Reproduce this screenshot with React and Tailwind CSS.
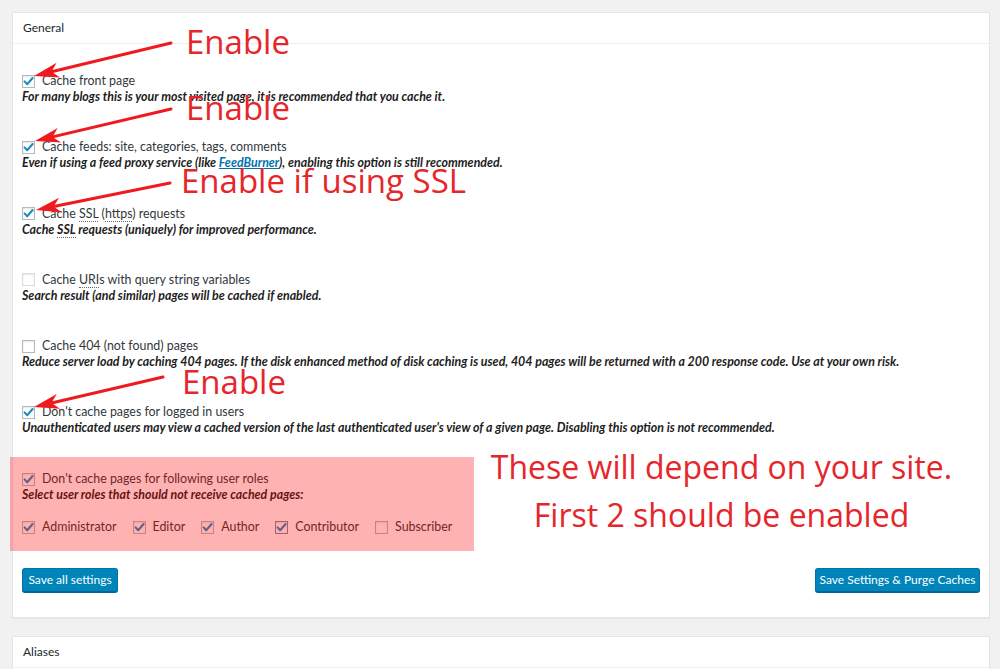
import React from "react";

function Box({ checked, variant }) {
  const border =
    variant === "light"
      ? "border-[#dcdcdc]"
      : variant === "focus"
      ? "border-[#7f8a9a]"
      : "border-[#b4b9be]";
  return (
    <span
      className={`relative inline-flex w-[13px] h-[13px] shrink-0 border ${border} bg-white shadow-[inset_0_1px_2px_rgba(0,0,0,0.1)]`}
    >
      {checked && (
        <svg viewBox="0 0 13 13" className="absolute -left-px -top-px w-[13px] h-[13px]">
          <path d="M2.6 6.4 L5.2 9.2 L10.6 3" fill="none" stroke="#1e8cbe" strokeWidth="2.1" strokeLinecap="round" strokeLinejoin="round" />
        </svg>
      )}
    </span>
  );
}

function Abbr({ children }) {
  return <span className="border-b border-dotted border-[#666]">{children}</span>;
}

function Item({ checked, variant, label, desc }) {
  return (
    <div className="flex flex-col">
      <label className="flex items-center gap-[7px] h-[16px] text-[12.4px] text-[#32373c]">
        <Box checked={checked} variant={variant} />
        <span className="leading-[16px]">{label}</span>
      </label>
      <div className="h-[15px] leading-[15px] text-[12.4px] font-bold italic text-[#1d1d1d] whitespace-nowrap">{desc}</div>
    </div>
  );
}

function Arrow({ x1, y1, x2, y2 }) {
  const dx = x2 - x1;
  const dy = y2 - y1;
  const L = Math.hypot(dx, dy);
  const ux = dx / L;
  const uy = dy / L;
  const px = -uy;
  const py = ux;
  const hl = 25;
  const hw = 7.5;
  const bx = x2 - ux * hl;
  const by = y2 - uy * hl;
  const nx = x2 - ux * hl * 0.72;
  const ny = y2 - uy * hl * 0.72;
  const pts = `${x2},${y2} ${bx + px * hw},${by + py * hw} ${nx},${ny} ${bx - px * hw},${by - py * hw}`;
  return (
    <g>
      <line x1={x1} y1={y1} x2={nx} y2={ny} stroke="#f01a1e" strokeWidth="3" strokeLinecap="round" />
      <polygon points={pts} fill="#f01a1e" />
    </g>
  );
}

const roles = [
  ["Administrator", true, "normal"],
  ["Editor", true, "normal"],
  ["Author", true, "normal"],
  ["Contributor", true, "focus"],
  ["Subscriber", false, "normal"],
];

export default function App() {
  return (
    <div className="relative w-[1000px] h-[669px] overflow-hidden bg-[#f1f1f1] font-['Lato',sans-serif]">
      <div className="ml-[12px] mr-[10px] pt-[12px]">
        <section className="bg-white border border-[#e5e5e5] shadow-[0_1px_1px_rgba(0,0,0,0.04)]">
          <h3 className="h-[31px] border-b border-[#eeeeee] pl-[10px] flex items-center text-[12px] text-[#23282d]">General</h3>
          <div className="pl-[9px] pr-[9px] pt-[29px] pb-[25px]">
            <div className="flex flex-col gap-[35.3px]">
              <Item
                checked
                label="Cache front page"
                desc="For many blogs this is your most visited page, it is recommended that you cache it."
              />
              <Item
                checked
                label="Cache feeds: site, categories, tags, comments"
                desc={
                  <>
                    Even if using a feed proxy service (like <a className="text-[#0073aa] underline">FeedBurner</a>), enabling this option is still recommended.
                  </>
                }
              />
              <Item
                checked
                label={
                  <>
                    Cache <Abbr>SSL</Abbr> (<Abbr>https</Abbr>) requests
                  </>
                }
                desc={
                  <>
                    Cache <Abbr>SSL</Abbr> requests (uniquely) for improved performance.
                  </>
                }
              />
              <Item
                variant="light"
                label={
                  <>
                    Cache <Abbr>URI</Abbr>s with query string variables
                  </>
                }
                desc="Search result (and similar) pages will be cached if enabled."
              />
              <Item
                label="Cache 404 (not found) pages"
                desc="Reduce server load by caching 404 pages. If the disk enhanced method of disk caching is used, 404 pages will be returned with a 200 response code. Use at your own risk."
              />
              <Item
                checked
                label="Don't cache pages for logged in users"
                desc="Unauthenticated users may view a cached version of the last authenticated user's view of a given page. Disabling this option is not recommended."
              />
            </div>

            <div className="relative mt-[22px] -ml-[12px] pl-[12px] w-[464px] pt-[14px] pb-[16px]">
              <Item
                checked
                label="Don't cache pages for following user roles"
                desc="Select user roles that should not receive cached pages:"
              />
              <div className="mt-[17px] h-[16px] flex items-center gap-[16px]">
                {roles.map(([name, c, v]) => (
                  <label key={name} className="flex items-center gap-[7px] text-[12.4px] text-[#32373c]">
                    <Box checked={c} variant={v} />
                    <span>{name}</span>
                  </label>
                ))}
              </div>
              <div className="absolute inset-0 bg-[rgba(255,0,0,0.3)] pointer-events-none" />
            </div>

            <div className="mt-[17px] flex justify-between">
              <button className="w-[96px] h-[24px] rounded-[3px] bg-[#0085ba] border border-[#0073aa] border-b-[#006799] shadow-[0_1px_0_#006799] text-white text-[12px] leading-[22px] text-center">
                Save all settings
              </button>
              <button className="w-[165px] h-[24px] rounded-[3px] bg-[#0085ba] border border-[#0073aa] border-b-[#006799] shadow-[0_1px_0_#006799] text-white text-[12px] leading-[22px] text-center">
                Save Settings &amp; Purge Caches
              </button>
            </div>
          </div>
        </section>

        <section className="mt-[18px] bg-white border border-[#e5e5e5] shadow-[0_1px_1px_rgba(0,0,0,0.04)]">
          <h3 className="h-[31px] border-b border-[#eeeeee] pl-[10px] flex items-center text-[12px] text-[#23282d]">Aliases</h3>
          <div className="h-[20px]" />
        </section>
      </div>

      <svg className="absolute inset-0 w-[1000px] h-[669px] pointer-events-none" viewBox="0 0 1000 669">
        <Arrow x1={171} y1={43} x2={34} y2={76} />
        <Arrow x1={171} y1={109} x2={35} y2={141} />
        <Arrow x1={170} y1={183} x2={36} y2={210} />
        <Arrow x1={163} y1={377} x2={34} y2={407} />
      </svg>

      <div className="absolute left-[186px] top-[25px] text-[33px] leading-[33px] text-[#e5262b] font-['Open_Sans',sans-serif] whitespace-nowrap">Enable</div>
      <div className="absolute left-[186px] top-[91px] text-[33px] leading-[33px] text-[#e5262b] font-['Open_Sans',sans-serif] whitespace-nowrap">Enable</div>
      <div className="absolute left-[181px] top-[164px] text-[33px] leading-[33px] text-[#e5262b] font-['Open_Sans',sans-serif] whitespace-nowrap">Enable if using SSL</div>
      <div className="absolute left-[182px] top-[365px] text-[33px] leading-[33px] text-[#e5262b] font-['Open_Sans',sans-serif] whitespace-nowrap">Enable</div>
      <div className="absolute left-[460px] top-[443px] w-[523px] text-center text-[32px] leading-[48px] text-[#e5262b] font-['Open_Sans',sans-serif] whitespace-nowrap">
        <div>These will depend on your site.</div>
        <div>First 2 should be enabled</div>
      </div>
    </div>
  );
}
